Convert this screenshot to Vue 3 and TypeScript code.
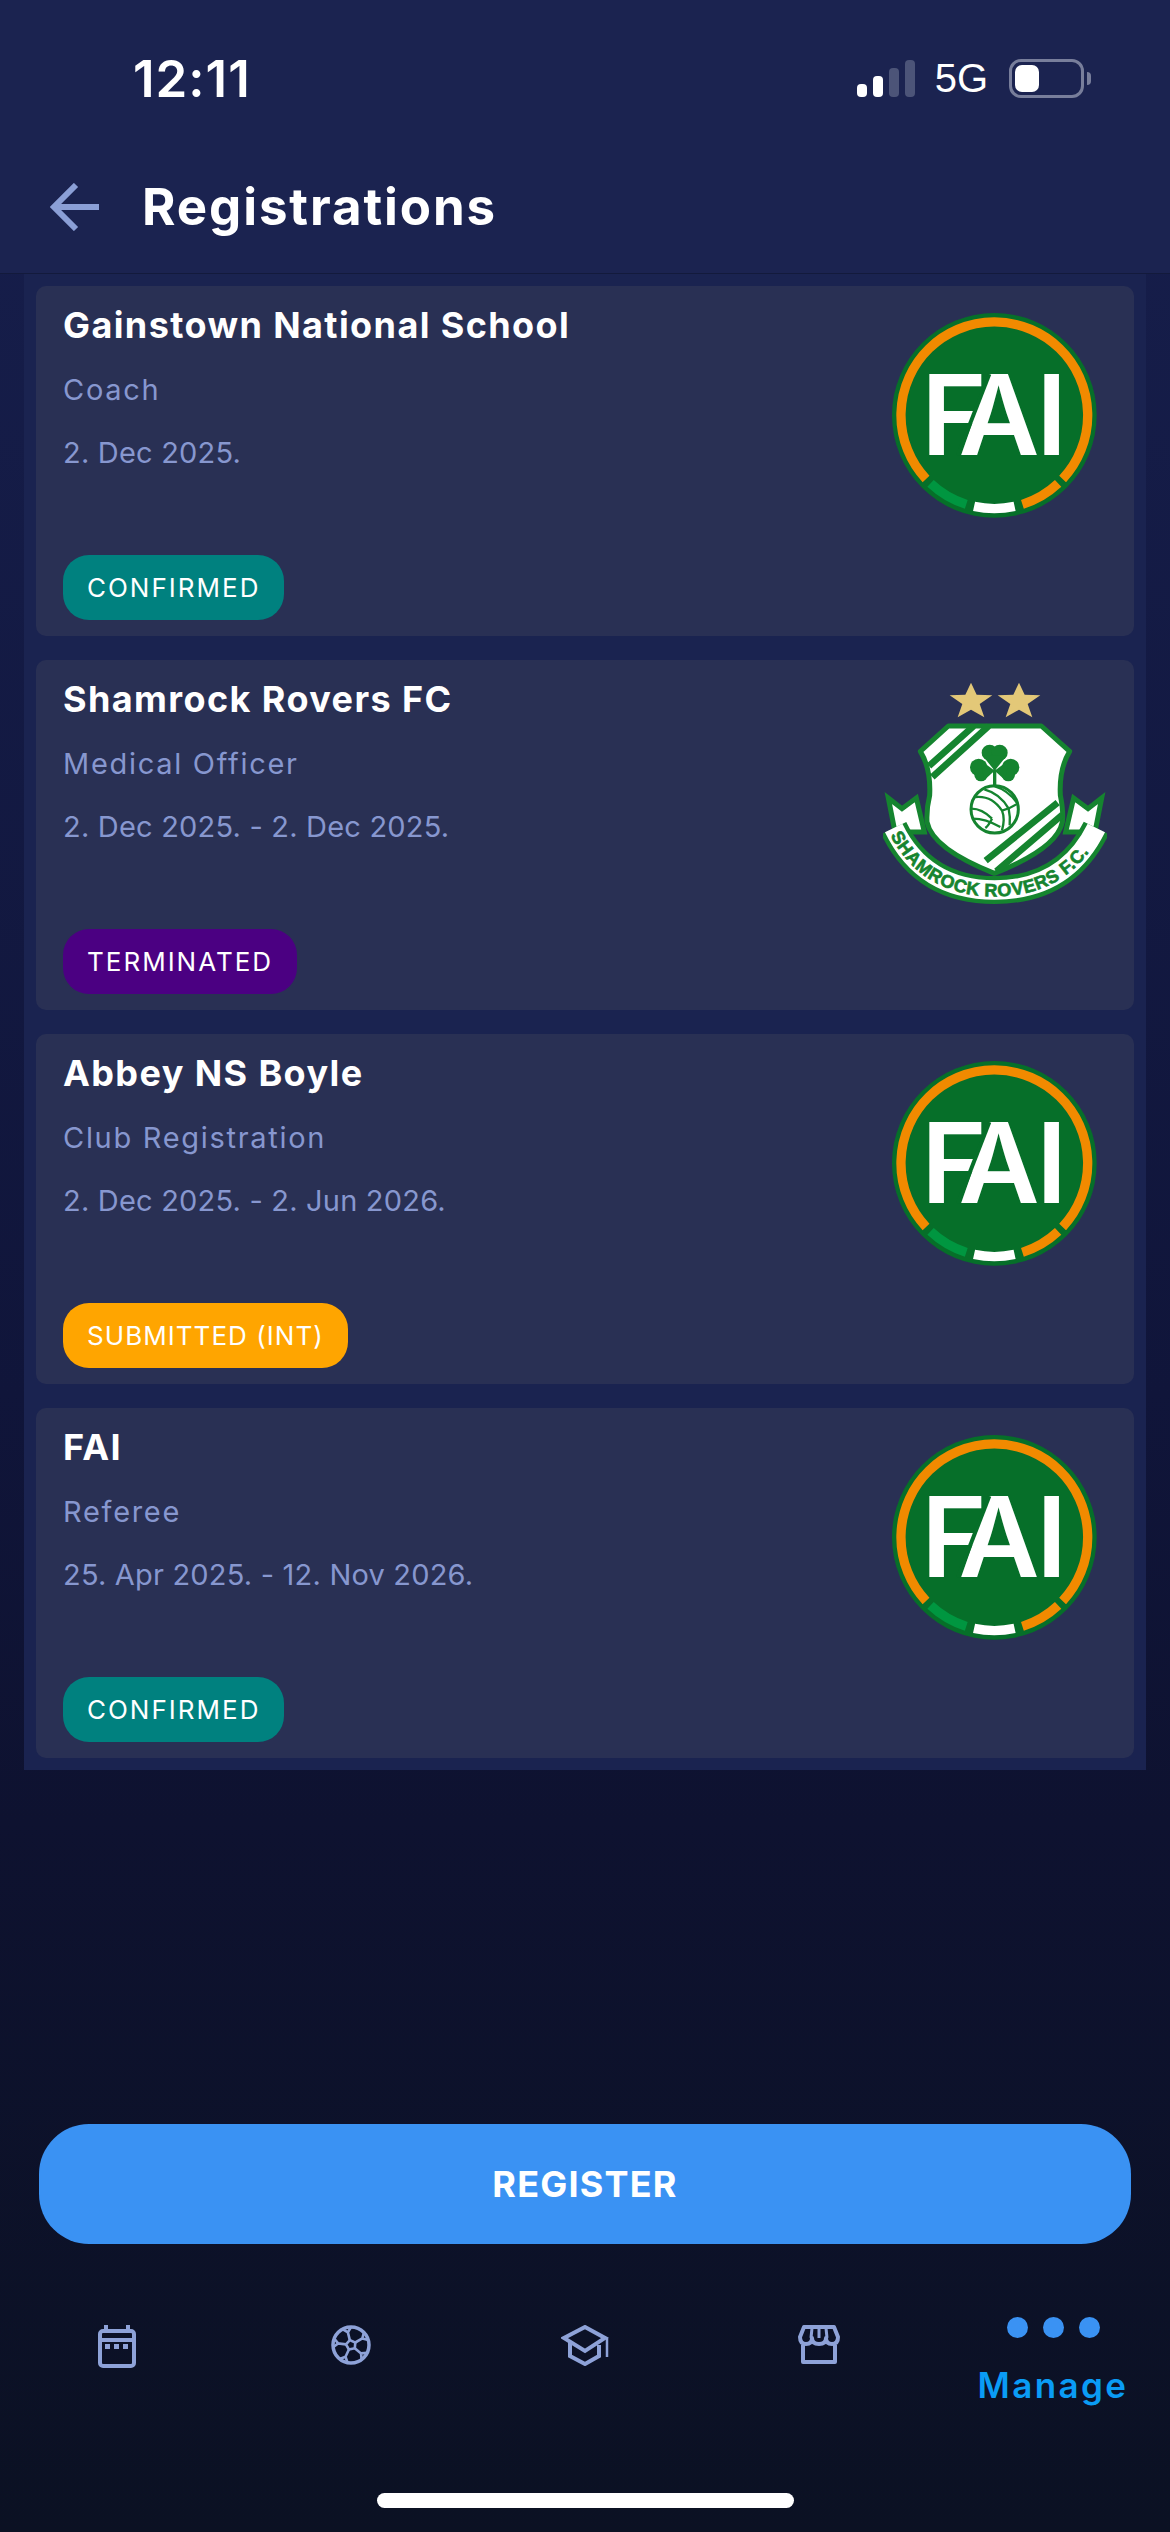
<script setup lang="ts">
interface Registration {
  club: string;
  role: string;
  dates: string;
  status: string;
  statusClass: string;
  logo: "fai" | "rovers";
}

const registrations: Registration[] = [
  { club: "Gainstown National School", role: "Coach", dates: "2. Dec 2025.", status: "CONFIRMED", statusClass: "confirmed", logo: "fai" },
  { club: "Shamrock Rovers FC", role: "Medical Officer", dates: "2. Dec 2025. - 2. Dec 2025.", status: "TERMINATED", statusClass: "terminated", logo: "rovers" },
  { club: "Abbey NS Boyle", role: "Club Registration", dates: "2. Dec 2025. - 2. Jun 2026.", status: "SUBMITTED (INT)", statusClass: "submitted", logo: "fai" },
  { club: "FAI", role: "Referee", dates: "25. Apr 2025. - 12. Nov 2026.", status: "CONFIRMED", statusClass: "confirmed", logo: "fai" },
];
</script>

<template>
  <div class="page">
    <header class="top">
      <div class="status-bar">
        <span class="clock">12:11</span>
        <div class="status-right">
          <div class="signal">
            <i class="on bar-1"></i>
            <i class="on bar-2"></i>
            <i class="bar-3"></i>
            <i class="bar-4"></i>
          </div>
          <span class="net">5G</span>
          <div class="battery"><b></b></div>
          <div class="battery-cap"></div>
        </div>
      </div>
      <div class="title-row">
        <svg class="back" viewBox="0 0 50 48" fill="none" stroke="#8b9fd6" stroke-width="6">
          <path d="M26 2 L4 24 L26 46" />
          <path d="M4 24 H49" />
        </svg>
        <h1>Registrations</h1>
      </div>
    </header>

    <section class="panel">
      <article v-for="reg in registrations" :key="reg.club" class="card">
        <div class="info">
          <h2>{{ reg.club }}</h2>
          <p class="role">{{ reg.role }}</p>
          <p class="dates">{{ reg.dates }}</p>
          <span class="badge" :class="reg.statusClass">{{ reg.status }}</span>
        </div>

        <svg v-if="reg.logo === 'fai'" class="logo-fai" viewBox="95 68 615 617">
          <circle cx="402" cy="376" r="308" fill="#066f29" />
          <g fill="none" stroke-width="28">
            <path d="M196.5 567.6 A281 281 0 1 1 607.5 567.6" stroke="#f18a00" />
            <path d="M210 581 A281 281 0 0 0 317.5 644" stroke="#009640" />
            <path d="M341 650 A281 281 0 0 0 463 650" stroke="#ffffff" />
            <path d="M486.5 644 A281 281 0 0 0 594 581" stroke="#f18a00" />
          </g>
          <text class="fai-text" x="182 294 528" y="496" fill="#ffffff">FAI</text>
          <!-- the notch between the F arm and the A -->
          <path d="M387 252 L292 496" stroke="#066f29" stroke-width="12" />
        </svg>

        <svg v-else class="logo-rovers" viewBox="68 60 672 666">
          <g fill="#e3c878">
            <polygon points="332,62 349,98 396,100 358,126 372,166 332,143 292,166 306,126 268,100 315,98" />
            <polygon points="476,62 493,98 540,100 502,126 516,166 476,143 436,166 450,126 412,100 459,98" />
          </g>
          <path d="M84 408 L125 440 L168 408 L192 510 L104 510 Z" fill="#ffffff" stroke="#15842f" stroke-width="15" />
          <path d="M724 408 L683 440 L640 408 L616 510 L704 510 Z" fill="#ffffff" stroke="#15842f" stroke-width="15" />
          <path
            d="M264 192 H543 L628 268 Q596 320 600 400 Q610 450 606 480 Q590 560 402 634 Q216 560 200 480 Q198 440 208 400 Q212 320 180 268 Z"
            fill="#ffffff"
            stroke="#15842f"
            stroke-width="15"
            stroke-linejoin="round"
          />
          <path d="M340 192 L206 312 M385 192 L216 345" stroke="#15842f" stroke-width="20" fill="none" />
          <path d="M592 422 L376 596 M606 458 L408 628" stroke="#15842f" stroke-width="20" fill="none" />
          <g fill="#15842f">
            <circle cx="388" cy="272" r="24" />
            <circle cx="418" cy="272" r="24" />
            <polygon points="366,280 440,280 403,326" />
            <circle cx="355" cy="316" r="26" />
            <circle cx="362" cy="338" r="20" />
            <polygon points="360,294 403,326 372,354" />
            <circle cx="451" cy="316" r="26" />
            <circle cx="444" cy="338" r="20" />
            <polygon points="446,294 403,326 434,354" />
            <rect x="398" y="322" width="10" height="60" />
          </g>
          <circle cx="403" cy="442" r="71" fill="#ffffff" stroke="#15842f" stroke-width="9" />
          <g fill="none" stroke="#15842f" stroke-width="7">
            <path d="M345 405 Q395 400 425 446 Q435 470 425 505" />
            <path d="M372 382 Q420 395 445 440 Q450 462 448 490" />
            <path d="M400 372 Q445 385 472 425" />
            <path d="M333 440 Q365 440 395 470 M338 470 Q375 470 420 495" />
            <path d="M425 446 Q448 440 472 425 M395 470 Q385 490 375 498" />
          </g>
          <path id="rovers-band" d="M100 498 Q190 684 403 684 Q616 684 708 498" fill="none" stroke="#15842f" stroke-width="84" />
          <path d="M100 498 Q190 684 403 684 Q616 684 708 498" fill="none" stroke="#ffffff" stroke-width="58" />
          <text class="rovers-text" fill="#15842f" stroke="#15842f" stroke-width="2">
            <textPath href="#rovers-band" startOffset="14" textLength="672" lengthAdjust="spacing">
              <tspan dy="19">SHAMROCK ROVERS F.C.</tspan>
            </textPath>
          </text>
        </svg>
      </article>
    </section>

    <button class="register" type="button">REGISTER</button>

    <nav class="tabs">
      <div class="tab">
        <svg width="38" height="43" viewBox="0 0 38 43" fill="none" stroke="#8ea2d8" stroke-width="4">
          <rect x="2" y="6" width="34" height="35" rx="3" />
          <path d="M2 15 H36" />
          <path d="M8 0 V6 M30 0 V6" />
          <g fill="#8ea2d8" stroke="none">
            <rect x="7" y="19" width="5" height="5" />
            <rect x="16" y="19" width="5" height="5" />
            <rect x="25" y="19" width="5" height="5" />
          </g>
        </svg>
      </div>
      <div class="tab">
        <svg width="40" height="40" viewBox="0 0 40 40" fill="none" stroke="#8ea2d8">
          <circle cx="20" cy="20" r="18" stroke-width="3.5" />
          <g stroke-width="2.6">
            <path d="M24.3 17.5 L23.8 23.2 L17.9 24.5 L15 19.4 L18.8 15.1 Z" />
            <path d="M24.3 17.5 L31.3 13.5 L32.9 7.5 M31.3 13.5 L37.3 15" />
            <path d="M23.8 23.2 L30 28.4 L36.2 27.9 M30 28.4 L30.6 34.6" />
            <path d="M17.9 24.5 L14.5 31.8 L16.6 37.7 M14.5 31.8 L8.7 34" />
            <path d="M15 19.4 L7.1 18.4 L2.1 22.2 M7.1 18.4 L3.2 13.5" />
            <path d="M18.8 15.1 L16.9 7.4 L11.5 4.1 M16.9 7.4 L20 2" />
          </g>
        </svg>
      </div>
      <div class="tab">
        <svg width="48" height="41" viewBox="0 0 48 41" fill="none" stroke="#8ea2d8" stroke-width="4">
          <path d="M24 2 L44 13 L24 26 L3 13 Z" />
          <path d="M9 17 V31 L24 39 L38 31 V20" />
          <path d="M46 13 V32" stroke-width="2.5" />
        </svg>
      </div>
      <div class="tab">
        <svg width="44" height="40" viewBox="0 0 44 40" fill="none" stroke="#8ea2d8" stroke-width="4">
          <path d="M6 20 V37 H38 V20" stroke-linejoin="round" />
          <path d="M7 2 H37 L41 12 Q41 19 35 19 Q29 19 29 13 Q29 19 22 19 Q15 19 15 13 Q15 19 9 19 Q3 19 3 12 Z" stroke-linejoin="round" />
          <path d="M15 3 L14 13 M22 3 V13 M29 3 L30 13" stroke-width="3" />
        </svg>
      </div>
      <div class="tab active">
        <div class="dots"><i></i><i></i><i></i></div>
        <span>Manage</span>
      </div>
    </nav>

    <div class="home-bar"></div>
  </div>
</template>

<style scoped>
.page {
  box-sizing: border-box;
  width: 1170px;
  height: 2532px;
  display: flex;
  flex-direction: column;
  background: linear-gradient(180deg, #171f4d 0%, #10153a 55%, #0e1230 72%, #0b1123 100%);
  font-family: Inter, "Open Sans", sans-serif;
  overflow: hidden;
}

.top {
  height: 273px;
  background: #1b2350;
  border-bottom: 1px solid #131a3c;
  flex-shrink: 0;
}

.status-bar {
  height: 156px;
  display: flex;
  justify-content: space-between;
  align-items: flex-start;
  padding: 54px 79px 0 133px;
  box-sizing: border-box;
}

.clock {
  color: #fff;
  font-size: 51px;
  line-height: 50px;
  font-weight: 600;
  letter-spacing: 1px;
}

.status-right {
  display: flex;
  align-items: center;
  height: 40px;
  margin-top: 4px;
}

.signal {
  display: flex;
  align-items: flex-end;
  gap: 6px;
  height: 38px;
}

.signal i {
  width: 10px;
  border-radius: 4px;
  background: #4c5478;
}

.signal i.on {
  background: #fff;
}

.bar-1 {
  height: 13px;
}

.bar-2 {
  height: 21px;
}

.bar-3 {
  height: 29px;
}

.bar-4 {
  height: 37px;
}

.net {
  color: #fff;
  font-family: "Liberation Sans", sans-serif;
  font-size: 40px;
  line-height: 40px;
  margin-left: 20px;
}

.battery {
  box-sizing: border-box;
  width: 75px;
  height: 39px;
  margin-left: 21px;
  padding: 3px;
  border: 3px solid #787e9b;
  border-radius: 12px;
}

.battery b {
  display: block;
  width: 24px;
  height: 100%;
  background: #fff;
  border-radius: 7px;
}

.battery-cap {
  width: 4px;
  height: 13px;
  margin-left: 3px;
  background: #787e9b;
  border-radius: 0 6px 6px 0;
}

.title-row {
  display: flex;
  align-items: center;
  height: 96px;
  margin-top: 3px;
  padding-left: 50px;
}

.back {
  width: 50px;
  height: 48px;
}

h1 {
  margin: 0 0 0 42px;
  color: #fff;
  font-size: 51px;
  line-height: 60px;
  font-weight: 700;
  letter-spacing: 1.9px;
}

.panel {
  margin: 0 24px;
  padding: 12px;
  background: #1a2350;
  display: flex;
  flex-direction: column;
  gap: 24px;
  flex-shrink: 0;
}

.card {
  height: 350px;
  box-sizing: border-box;
  display: flex;
  justify-content: space-between;
  align-items: flex-start;
  padding: 16px 37px 16px 27px;
  background: #293054;
  border-radius: 10px;
}

.info {
  height: 100%;
  display: flex;
  flex-direction: column;
  align-items: flex-start;
}

h2 {
  margin: 0;
  color: #fff;
  font-size: 36px;
  line-height: 46px;
  font-weight: 700;
  letter-spacing: 1.4px;
}

.role,
.dates {
  margin: 22px 0 0;
  color: #8797cf;
  font-size: 29px;
  line-height: 40px;
  font-weight: 400;
  letter-spacing: 1.7px;
}

.dates {
  margin-top: 23px;
  letter-spacing: 0.2px;
}

.badge {
  margin-top: auto;
  height: 65px;
  padding: 0 24px;
  display: flex;
  align-items: center;
  border-radius: 26px;
  color: #fff;
  font-size: 26px;
  font-weight: 400;
  letter-spacing: 2px;
}

.confirmed {
  background: #00817f;
}

.terminated {
  background: #4b0082;
}

.submitted {
  background: #ffa500;
  letter-spacing: 1.05px;
}

.logo-fai {
  width: 205px;
  height: 205px;
  margin-top: 11px;
  flex-shrink: 0;
}

.fai-text {
  font-family: Inter, sans-serif;
  font-size: 335px;
  font-weight: 600;
}

.logo-rovers {
  width: 224px;
  height: 222px;
  margin: 6px -10px 0 0;
  flex-shrink: 0;
}

.rovers-text {
  font-family: "Liberation Sans", sans-serif;
  font-size: 54px;
  font-weight: 700;
}

.register {
  margin: auto 39px 0;
  height: 120px;
  border: none;
  border-radius: 50px;
  background: #3a92f3;
  color: #fff;
  font-family: Inter, sans-serif;
  font-size: 36px;
  font-weight: 700;
  letter-spacing: 1.2px;
  flex-shrink: 0;
}

.tabs {
  display: grid;
  grid-template-columns: repeat(5, 1fr);
  margin-top: 72px;
  height: 89px;
  flex-shrink: 0;
}

.tab {
  display: flex;
  flex-direction: column;
  align-items: center;
  padding-top: 9px;
}

.tab.active {
  padding-top: 1px;
}

.dots {
  display: flex;
  gap: 15px;
  height: 22px;
}

.dots i {
  width: 21px;
  height: 21px;
  border-radius: 50%;
  background: #3a92f3;
}

.tab.active span {
  margin-top: 26px;
  color: #0a9cf5;
  font-size: 35px;
  line-height: 40px;
  font-weight: 600;
  letter-spacing: 2.4px;
}

.home-bar {
  width: 417px;
  height: 15px;
  margin: 88px auto 24px;
  border-radius: 8px;
  background: #fff;
  flex-shrink: 0;
}
</style>
